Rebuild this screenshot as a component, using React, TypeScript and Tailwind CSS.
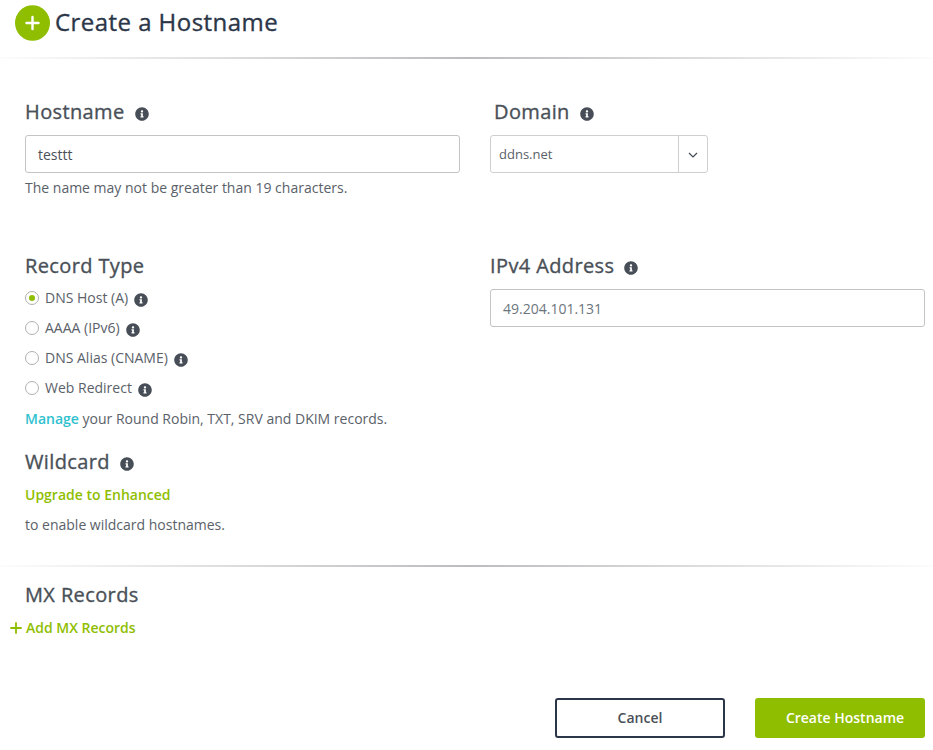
import React from 'react';
import { FaInfoCircle } from 'react-icons/fa';

const Info = ({ className = '' }: { className?: string }) => (
  <FaInfoCircle className={'size-[14px] shrink-0 text-[#474e57] ' + className} />
);

const Heading = ({ children, info, className = '' }: { children: React.ReactNode; info?: boolean; className?: string }) => (
  <h2 className={'flex h-[30px] items-center text-[20px] font-medium leading-[30px] tracking-[0.38px] text-[#495057] ' + className}>
    <span className="[-webkit-text-stroke:0.35px_#495057]">{children}</span>
    {info && <Info className="ml-[10px] mt-[4px]" />}
  </h2>
);

const Divider = () => (
  <div className="h-[2px] shrink-0 bg-[linear-gradient(to_right,#fcfcfc_0%,#d6d6d7_30%,#bbbbc2_50%,#d6d6d7_70%,#fcfcfc_100%)]" />
);

const options = ['DNS Host (A)', 'AAAA (IPv6)', 'DNS Alias (CNAME)', 'Web Redirect'];

export default function App() {
  return (
    <main className="flex h-[750px] w-[933px] flex-col overflow-hidden bg-white font-['Open_Sans',sans-serif] text-[14px] leading-5 text-[#5a6169]">
      <header className="flex h-[57px] shrink-0 items-start pl-[15px] pt-[5px]">
        <svg viewBox="0 0 35 36" className="h-[36px] w-[35px]">
          <ellipse cx="17.5" cy="18" rx="17.5" ry="17.8" fill="#8fbe00" />
          <path d="M17.5 12v12M11.5 18h12" stroke="#fff" strokeWidth="2.4" strokeLinecap="round" />
        </svg>
        <h1 className="ml-[5px] text-[24px] font-medium leading-[34px] tracking-[0.45px] text-[#2b3648] [-webkit-text-stroke:0.35px_#2b3648]">Create a Hostname</h1>
      </header>
      <Divider />

      <section className="flex h-[154px] shrink-0 pl-[25px] pt-[38px]">
        <div className="w-[465px]">
          <Heading info>Hostname</Heading>
          <div className="mt-2 flex h-[38px] w-[435px] items-center rounded-[3px] border border-[#c4c4c4] pl-3 pt-[2px] text-[#495057]">testtt</div>
          <p className="mt-[5px]">The name may not be greater than 19 characters.</p>
        </div>
        <div>
          <Heading info className="pl-1">Domain</Heading>
          <div className="mt-2 flex h-[38px] w-[218px] rounded-[3px] border border-[#cfcfcf]">
            <span className="flex flex-1 items-center pl-2 text-[13px]">ddns.net</span>
            <span className="flex w-[29px] items-center justify-center border-l border-[#cfcfcf]">
              <svg viewBox="0 0 10 6" className="mr-px mt-[2px] h-[6px] w-[10px]">
                <path d="M1 1l4 4 4-4" fill="none" stroke="#434a54" strokeWidth="1.2" />
              </svg>
            </span>
          </div>
        </div>
      </section>

      <section className="flex h-[352px] shrink-0 pl-[25px] pt-[38px]">
        <div className="w-[465px]">
          <Heading>Record Type</Heading>
          <div className="mt-[2px]">
            {options.map((o, i) => (
              <div key={o} className="flex h-[30px] items-center">
                <span className="flex size-[14px] items-center justify-center rounded-full border border-[#b0b0b0]">
                  {i === 0 && <span className="size-[6px] rounded-full bg-[#8fbe00]" />}
                </span>
                <span className="ml-[6px]">{o}</span>
                <Info className="ml-[6px] mt-[4px]" />
              </div>
            ))}
          </div>
          <p className="mt-[6px]"><a className="font-semibold text-[#2fc1cf]">Manage</a> your Round Robin, TXT, SRV and DKIM records.</p>
          <Heading info className="mt-[18px]">Wildcard</Heading>
          <p className="mt-2 font-semibold text-[#8fbe00]">Upgrade to Enhanced</p>
          <p className="mt-[10px]">to enable wildcard hostnames.</p>
        </div>
        <div>
          <Heading info>IPv4 Address</Heading>
          <div className="mt-2 flex h-[38px] w-[435px] items-center rounded-[3px] border border-[#c4c4c4] pl-3 pt-[2px] text-[#6c757d]">49.204.101.131</div>
        </div>
      </section>
      <Divider />

      <section className="h-[131px] shrink-0 pt-[13px]">
        <Heading className="pl-[25px]">MX Records</Heading>
        <div className="mt-2 flex items-center pl-[10px] font-semibold text-[#8fbe00]">
          <svg viewBox="0 0 12 12" className="mr-[4px] size-[12px]">
            <path d="M6 1v10M1 6h10" stroke="currentColor" strokeWidth="1.8" strokeLinecap="round" />
          </svg>
          Add MX Records
        </div>
      </section>

      <footer className="flex justify-end gap-[30px] pr-2">
        <button className="h-[40px] w-[170px] rounded-[3px] border-2 border-[#2b3648] font-semibold text-[#495057]">Cancel</button>
        <button className="h-[40px] w-[170px] rounded-[3px] bg-[#8fbe00] pl-[10px] font-semibold text-white">Create Hostname</button>
      </footer>
    </main>
  );
}
